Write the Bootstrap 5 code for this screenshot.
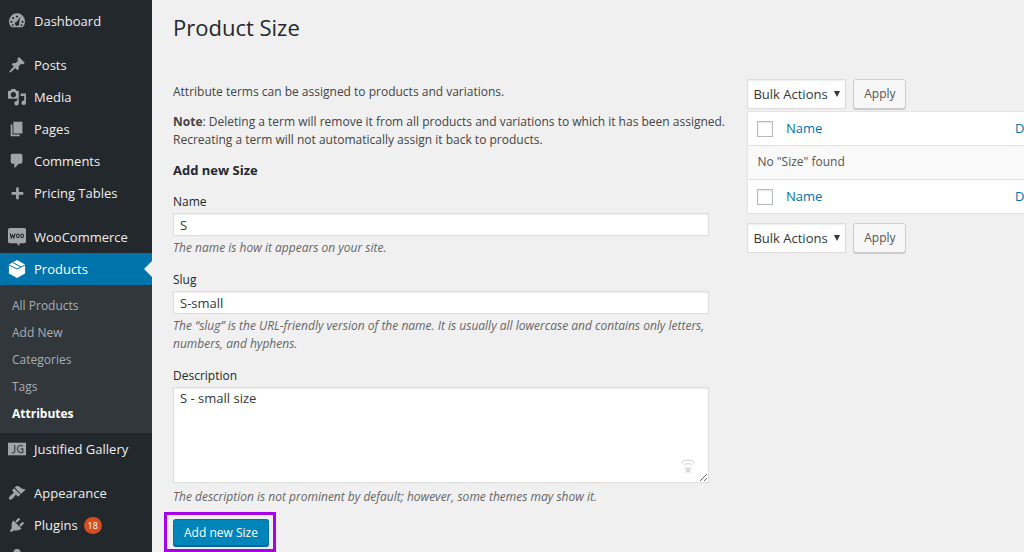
<!DOCTYPE html>
<html lang="en">
<head>
<meta charset="utf-8">
<meta name="viewport" content="width=device-width, initial-scale=1">
<title>Product Size</title>
<link href="https://cdn.jsdelivr.net/npm/bootstrap@5.3.0/dist/css/bootstrap.min.css" rel="stylesheet">
<style>
body{font-family:"Open Sans","Noto Sans",sans-serif;font-size:12px;line-height:18px;color:#444;background:#f0f0f0;height:100vh;overflow:hidden}
a{text-decoration:none}
.side-menu{flex:0 0 152px;background:#23282d;padding-top:5px;height:100vh;overflow:hidden;line-height:32px}
.side-menu .item{display:flex;align-items:center;height:32px;padding-left:8px;color:#eee;font-size:13px;position:relative;white-space:nowrap}
.side-menu .item svg{width:18px;height:18px;margin-right:8px;fill:#a0a5aa;flex:none}
.side-menu .gap-above{margin-top:12px}
.side-menu .current{background:#0073aa;color:#fff}
.side-menu .current svg{fill:#fff}
.side-menu .current::after{content:"";position:absolute;right:0;top:8px;border:8px solid transparent;border-right-color:#f0f0f0;border-left:0}
.sub-menu{background:#32373c;padding:7px 0 6px 12px;line-height:27px}
.sub-menu a{display:block;color:#a9aeb3}
.sub-menu a.on{color:#fff;font-weight:700}
.count{background:#d54e21;color:#fff;font-size:9px;line-height:17px;border-radius:9px;padding:0 4px;margin-left:6px}
.page{min-width:0;padding-left:21px;overflow:hidden}
.page h1{font-size:22px;line-height:30px;color:#23282d;font-weight:400;margin:0;padding-top:12px}
.columns{padding-top:37px}
.form-side{flex:0 0 67.5%;padding:4px 16px 0 0}
.form-side p{margin:0 0 12px}
.form-side h2{font-size:13px;line-height:18px;font-weight:700;color:#23282d;margin:0 0 14px}
.field{margin-bottom:14px}
.field label{display:block;line-height:18px;color:#23282d;margin-bottom:2px}
.field .form-control{width:96%;border:1px solid #ddd;border-radius:0;box-shadow:inset 0 1px 2px rgba(0,0,0,.07);color:#32373c;background:#fff;font-size:13px;line-height:18px;padding:1px 6px;min-height:0}
.field input.form-control{height:23px}
.field textarea.form-control{height:96px;resize:both}
.field .hint{font-style:italic;color:#666;margin:3px 0 0}
.area-wrap{position:relative}
.area-wrap svg{position:absolute;right:calc(4% + 14px);bottom:8px}
.last-field{margin-bottom:6px}
.last-field .hint{margin-top:5px}
.highlight{display:inline-block;border:3px solid #a800e8;padding:3px 3px 2px;margin-left:-9px}
.btn-save{background:#0085ba;border:1px solid #0073aa;border-bottom-color:#006799;box-shadow:0 1px 0 #006799;color:#fff;font-size:12px;line-height:18px;height:27px;padding:3px 10px;border-radius:3px;margin:1px 1px 1px 3px;display:block}
.btn-save:hover{background:#008ec2;color:#fff}
.list-side{flex:1 0 540px}
.bulk{gap:7px}
.bulk .form-select{width:99px;height:30px;border:1px solid #ddd;border-radius:0;box-shadow:inset 0 1px 2px rgba(0,0,0,.07);font-size:13px;line-height:18px;padding:0 0 0 5px;color:#32373c;background:#fff url("data:image/svg+xml,%3Csvg xmlns='http://www.w3.org/2000/svg' viewBox='0 0 6 6'%3E%3Cpath d='M0 0h6L3 6z' fill='%2332373c'/%3E%3C/svg%3E") no-repeat right 5px center/6px 6px}
.bulk .btn{height:30px;background:#f7f7f7;border:1px solid #ccc;box-shadow:0 1px 0 #ccc;border-radius:3px;color:#555;font-size:12px;line-height:18px;padding:0;width:53px}
.terms{width:540px;background:#fff;border:1px solid #e5e5e5;border-collapse:collapse;margin:2px 0 9px;table-layout:fixed;font-size:13px}
.terms th,.terms td{height:34px;border-bottom:1px solid #e1e1e1;padding:0 0 2px;font-weight:400;vertical-align:middle}
.terms td{background:#f9f9f9;padding-left:9px;font-size:12px;color:#555}
.terms .pick{width:38px;padding-left:9px}
.terms .nm{width:229px}
.terms a{color:#0073aa}
.terms .form-check-input{display:block;width:16px;height:16px;margin:3px 0 0;border:1px solid #b4b9be;border-radius:0;box-shadow:inset 0 1px 2px rgba(0,0,0,.1)}
</style>
</head>
<body>
<div class="d-flex">
<nav class="side-menu" aria-label="Admin menu">
  <a class="item" href="#"><svg viewBox="0 0 20 20"><path fill-rule="evenodd" d="M3.800 17A9 9 0 1 1 16.200 17zM10 3.800a1.200 1.200 0 1 0 .01 0zM5.700 5.500a1.200 1.200 0 1 0 .01 0zM3.800 9.600a1.200 1.200 0 1 0 .01 0zM16.200 9.600a1.200 1.200 0 1 0 .01 0zM13.900 5.300L9.700 10.700a2.400 2.400 0 1 0 2.500 1.200zM5.300 13.500a1 1 0 1 0 .01 0zM15 13.500a1 1 0 1 0 .01 0z"/></svg>Dashboard</a>
  <a class="item gap-above" href="#"><svg viewBox="0 0 20 20"><path d="M10.440 3.020l1.820-1.820 6.360 6.350-1.830 1.820c-1.050-.68-2.480-.57-3.410.36l-.75.75c-.92.93-1.040 2.350-.35 3.410l-1.830 1.820-2.410-2.410-2.800 2.790c-.42.42-3.380 2.710-3.800 2.290s1.860-3.390 2.280-3.810l2.790-2.790L4.100 9.360l1.830-1.820c1.050.69 2.480.57 3.400-.36l.75-.75c.93-.92 1.050-2.350.36-3.410z"/></svg>Posts</a>
  <a class="item" href="#"><svg viewBox="0 0 20 20"><path fill-rule="evenodd" d="M4 1L2.500 3H1Q0 3 0 4v7q0 1 1 1h10q1 0 1-1V4q0-1-1-1H9.500L8 1zM6 4.500a3 3 0 1 1-.01 0zM14 6h6v10.500a2.500 2.500 0 1 1-2-2.450V9h-4zM10 12.500h2v4.500a2.500 2.500 0 1 1-2-2.450z"/></svg>Media</a>
  <a class="item" href="#"><svg viewBox="0 0 20 20"><path d="M6 15V2h10v13zM5 16h8v2H3V5h2z"/></svg>Pages</a>
  <a class="item" href="#"><svg viewBox="0 0 20 20"><path d="M5 2h9q2 0 2 2v7q0 2-2 2h-2l-5 5v-5H5q-2 0-2-2V4q0-2 2-2z"/></svg>Comments</a>
  <a class="item" href="#"><svg viewBox="0 0 20 20"><path d="M17 9v3h-5v5H9v-5H4V9h5V4h3v5z"/></svg>Pricing Tables</a>
  <a class="item gap-above" href="#"><svg viewBox="0 0 20 20"><rect y="0" width="20" height="17" rx="2"/><path d="M9.500 17h4l-1.500 3z"/><path d="M2.500 6l1 5L5 7.500 6.500 11 8 6" fill="none" stroke="#23282d" stroke-width="1.200"/><ellipse cx="11" cy="8.700" rx="1.500" ry="2.100" fill="none" stroke="#23282d" stroke-width="1.200"/><ellipse cx="15.700" cy="8.700" rx="1.500" ry="2.100" fill="none" stroke="#23282d" stroke-width="1.200"/></svg>WooCommerce</a>
  <a class="item current" href="#"><svg viewBox="0 0 20 20"><path d="M10 0l9 5v10l-9 5-9-5V5z"/><path d="M1 5.500l9 4.500 9-4.500M5.500 3l9 4.700" fill="none" stroke="#0073aa" stroke-width="1.100"/></svg>Products</a>
  <div class="sub-menu">
    <a href="#">All Products</a><a href="#">Add New</a><a href="#">Categories</a><a href="#">Tags</a><a class="on" href="#" aria-current="page">Attributes</a>
  </div>
  <a class="item" href="#"><svg viewBox="0 0 20 20"><rect y="3" width="20" height="14"/><path d="M4 14q3.500 1 3.500-2V5.500M16.500 7C13 4.500 10.500 7 10.500 10s3 5 6 3.500V10H14" fill="none" stroke="#464b50" stroke-width="1.500"/></svg>Justified Gallery</a>
  <a class="item gap-above" href="#"><svg viewBox="0 0 20 20"><path d="M14.480 11.060L7.410 3.990l1.500-1.500c.5-.56 2.300-.47 3.510.32 1.210.8 1.430 1.280 2.910 2.100 1.180.64 2.450 1.260 4.450.85zm-.71.710L6.700 4.700 4.930 6.470c-.39.39-.39 1.020 0 1.410l1.060 1.060c.39.39.39 1.030 0 1.420-.6.6-1.430 1.110-2.210 1.690-.35.26-.7.530-1.010.840C1.430 14.230.4 16.080 1.400 17.070c.99 1 2.840-.030 4.180-1.360.31-.31.580-.66.850-1.020.57-.78 1.080-1.610 1.690-2.210.39-.39 1.020-.39 1.410 0l1.060 1.060c.39.39 1.020.39 1.410 0z"/></svg>Appearance</a>
  <a class="item" href="#"><svg viewBox="0 0 20 20"><path d="M13.110 4.360L9.870 7.600 8 5.730l3.240-3.240c.35-.34 1.050-.2 1.560.32.52.51.660 1.210.310 1.550zm-8 1.770l.91-1.120 9.010 9.010-1.190.84c-.71.710-2.630 1.160-3.820 1.160H6.140L4.900 17.260c-.59.590-1.540.590-2.120 0-.59-.58-.59-1.530 0-2.120l1.240-1.240v-3.880c0-1.130.4-3.190 1.090-3.890zm7.260 3.970l3.240-3.240c.34-.35 1.040-.21 1.550.31.52.51.660 1.210.31 1.550l-3.240 3.250z"/></svg>Plugins <span class="count">18</span></a>
  <a class="item" href="#" aria-label="Users"><svg viewBox="0 0 20 20"><circle cx="10" cy="5" r="4"/><path d="M2 18q0-8 8-8t8 8z"/></svg></a>
</nav>
<main class="page flex-grow-1">
  <h1>Product Size</h1>
  <div class="columns d-flex">
    <form class="form-side">
      <p>Attribute terms can be assigned to products and variations.</p>
      <p><strong>Note</strong>: Deleting a term will remove it from all products and variations to which it has been assigned. Recreating a term will not automatically assign it back to products.</p>
      <h2>Add new Size</h2>
      <div class="field">
        <label for="term-name">Name</label>
        <input class="form-control" id="term-name" type="text" value="S">
        <p class="hint">The name is how it appears on your site.</p>
      </div>
      <div class="field">
        <label for="term-slug">Slug</label>
        <input class="form-control" id="term-slug" type="text" value="S-small">
        <p class="hint">The “slug” is the URL-friendly version of the name. It is usually all lowercase and contains only letters, numbers, and hyphens.</p>
      </div>
      <div class="field last-field">
        <label for="term-desc">Description</label>
        <div class="area-wrap">
          <textarea class="form-control" id="term-desc" spellcheck="false">S - small size</textarea>
          <svg width="14" height="16" viewBox="0 0 14 16" fill="none" stroke="#ddd" aria-hidden="true"><path d="M1 5V3q6-4 12 0v2M3 6q4-3 8 0" stroke-width="1.300"/><path d="M4.500 8.500l5 5M9.500 8.500l-5 5" stroke="#ccc" stroke-width="1.500"/></svg>
        </div>
        <p class="hint">The description is not prominent by default; however, some themes may show it.</p>
      </div>
      <div class="highlight"><button class="btn btn-save" type="button">Add new Size</button></div>
    </form>
    <section class="list-side">
      <div class="bulk d-flex">
        <select class="form-select" aria-label="Bulk action, top"><option>Bulk Actions</option></select>
        <button class="btn" type="button">Apply</button>
      </div>
      <table class="terms">
        <thead><tr><th class="pick"><input class="form-check-input" type="checkbox" aria-label="Select all"></th><th class="nm"><a href="#">Name</a></th><th><a href="#">Description</a></th></tr></thead>
        <tbody><tr><td colspan="3">No "Size" found</td></tr></tbody>
        <tfoot><tr><th class="pick"><input class="form-check-input" type="checkbox" aria-label="Select all, bottom"></th><th class="nm"><a href="#">Name</a></th><th><a href="#">Description</a></th></tr></tfoot>
      </table>
      <div class="bulk d-flex">
        <select class="form-select" aria-label="Bulk action, bottom"><option>Bulk Actions</option></select>
        <button class="btn" type="button">Apply</button>
      </div>
    </section>
  </div>
</main>
</div>
<script src="https://cdn.jsdelivr.net/npm/bootstrap@5.3.0/dist/js/bootstrap.bundle.min.js"></script>
</body>
</html>
